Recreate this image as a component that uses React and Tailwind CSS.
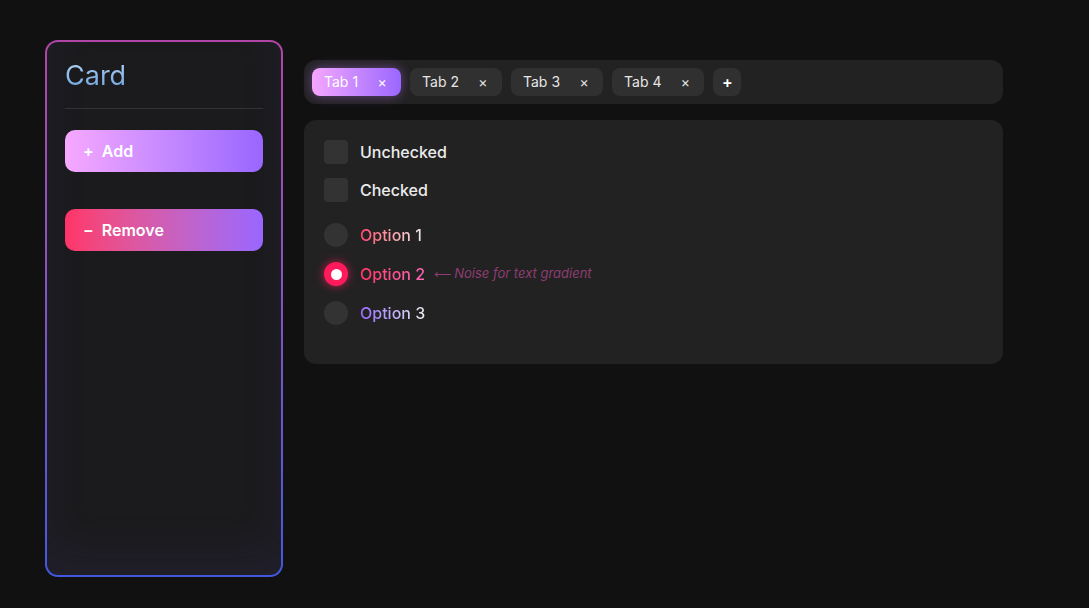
import React from 'react';

const tabs = ['Tab 1', 'Tab 2', 'Tab 3', 'Tab 4'];

const Tab = ({ label, active }) => (
  <div
    className={
      active
        ? 'flex h-7 items-center rounded-lg bg-gradient-to-r from-[#f6a6ff] to-[#9b66ff] pl-3 pr-[9px] text-white shadow-[0_0_12px_rgba(190,110,255,0.45)]'
        : 'flex h-7 items-center rounded-lg bg-[#303030] pl-3 pr-[9px] text-[#e6e6e6]'
    }
  >
    <span className="text-sm">{label}</span>
    <span className="ml-[14px] flex h-5 w-5 items-center justify-center text-sm">×</span>
  </div>
);

const Checkbox = ({ label }) => (
  <div className="flex items-center gap-3">
    <div className="h-6 w-6 rounded bg-[#333333]" />
    <span className="text-base font-medium text-[#ececec]">{label}</span>
  </div>
);

const Radio = ({ num, selected, gradient }) => (
  <div className="flex items-center gap-3">
    {selected ? (
      <div className="flex h-6 w-6 items-center justify-center rounded-full bg-[#ff1a5c] shadow-[0_0_10px_rgba(255,30,95,0.7)]">
        <div className="h-[11px] w-[11px] rounded-full bg-white" />
      </div>
    ) : (
      <div className="h-6 w-6 rounded-full bg-[#333333]" />
    )}
    <span className={'bg-clip-text text-base font-medium text-transparent ' + gradient}>
      Option {num}
    </span>
    {selected && (
      <span className="-ml-[3px] flex items-center text-[13px] italic text-[#8e3d72]">
        <span className="mr-[3px] text-[12px]" style={{ fontFamily: '"DejaVu Sans", sans-serif' }}>⟵</span>
        Noise for text gradient
      </span>
    )}
  </div>
);

export default function App() {
  return (
    <div
      className="flex min-h-screen gap-[21px] bg-[#111111] pl-[45px] pt-10 pb-[30px]"
      style={{ fontFamily: 'Inter, "Noto Sans", sans-serif' }}
    >
      <div className="h-[537px] w-[238px] rounded-[13px] bg-gradient-to-b from-[#b145a8] to-[#4257e0] p-[2px]">
        <div className="flex h-full flex-col rounded-[11px] bg-[#1b1b1d] px-[18px] pt-[18px] shadow-[inset_0_-24px_40px_rgba(70,60,140,0.12)]">
          <h2 className="bg-gradient-to-b from-[#b0d4f5] to-[#6a9fdc] bg-clip-text text-[27px] leading-8 text-transparent">
            Card
          </h2>
          <div className="mt-[16px] h-px bg-[#333335]" />
          <button className="mt-[21px] flex h-[42px] items-center gap-2 rounded-[10px] bg-gradient-to-r from-[#f7a8ff] to-[#9966ff] px-[18px] text-base font-semibold text-white">
            <span>+</span>
            <span>Add</span>
          </button>
          <button className="mt-[37px] flex h-[42px] items-center gap-2 rounded-[10px] bg-gradient-to-r from-[#ff3366] to-[#9966ff] px-[18px] text-base font-semibold text-white">
            <span>−</span>
            <span>Remove</span>
          </button>
        </div>
      </div>

      <div className="flex w-[699px] flex-col gap-4 pt-5">
        <div className="flex h-11 items-center gap-[9px] rounded-xl bg-[#222222] px-2">
          {tabs.map((t, i) => (
            <Tab key={t} label={t} active={i === 0} />
          ))}
          <div className="flex h-7 w-7 items-center justify-center rounded-lg bg-[#303030] text-base font-semibold text-white">
            +
          </div>
        </div>

        <div className="flex h-[244px] flex-col rounded-xl bg-[#222222] px-5 pt-5">
          <div className="flex flex-col gap-[14px]">
            <Checkbox label="Unchecked" />
            <Checkbox label="Checked" />
          </div>
          <div className="mt-[21px] flex flex-col gap-[15px]">
            <Radio num={1} gradient="bg-gradient-to-r from-[#ff3d6e] to-[#e8e8e8]" />
            <Radio num={2} selected gradient="bg-gradient-to-r from-[#ff3366] to-[#ff66b8]" />
            <Radio num={3} gradient="bg-gradient-to-r from-[#9966ff] to-[#ececec]" />
          </div>
        </div>
      </div>
    </div>
  );
}
